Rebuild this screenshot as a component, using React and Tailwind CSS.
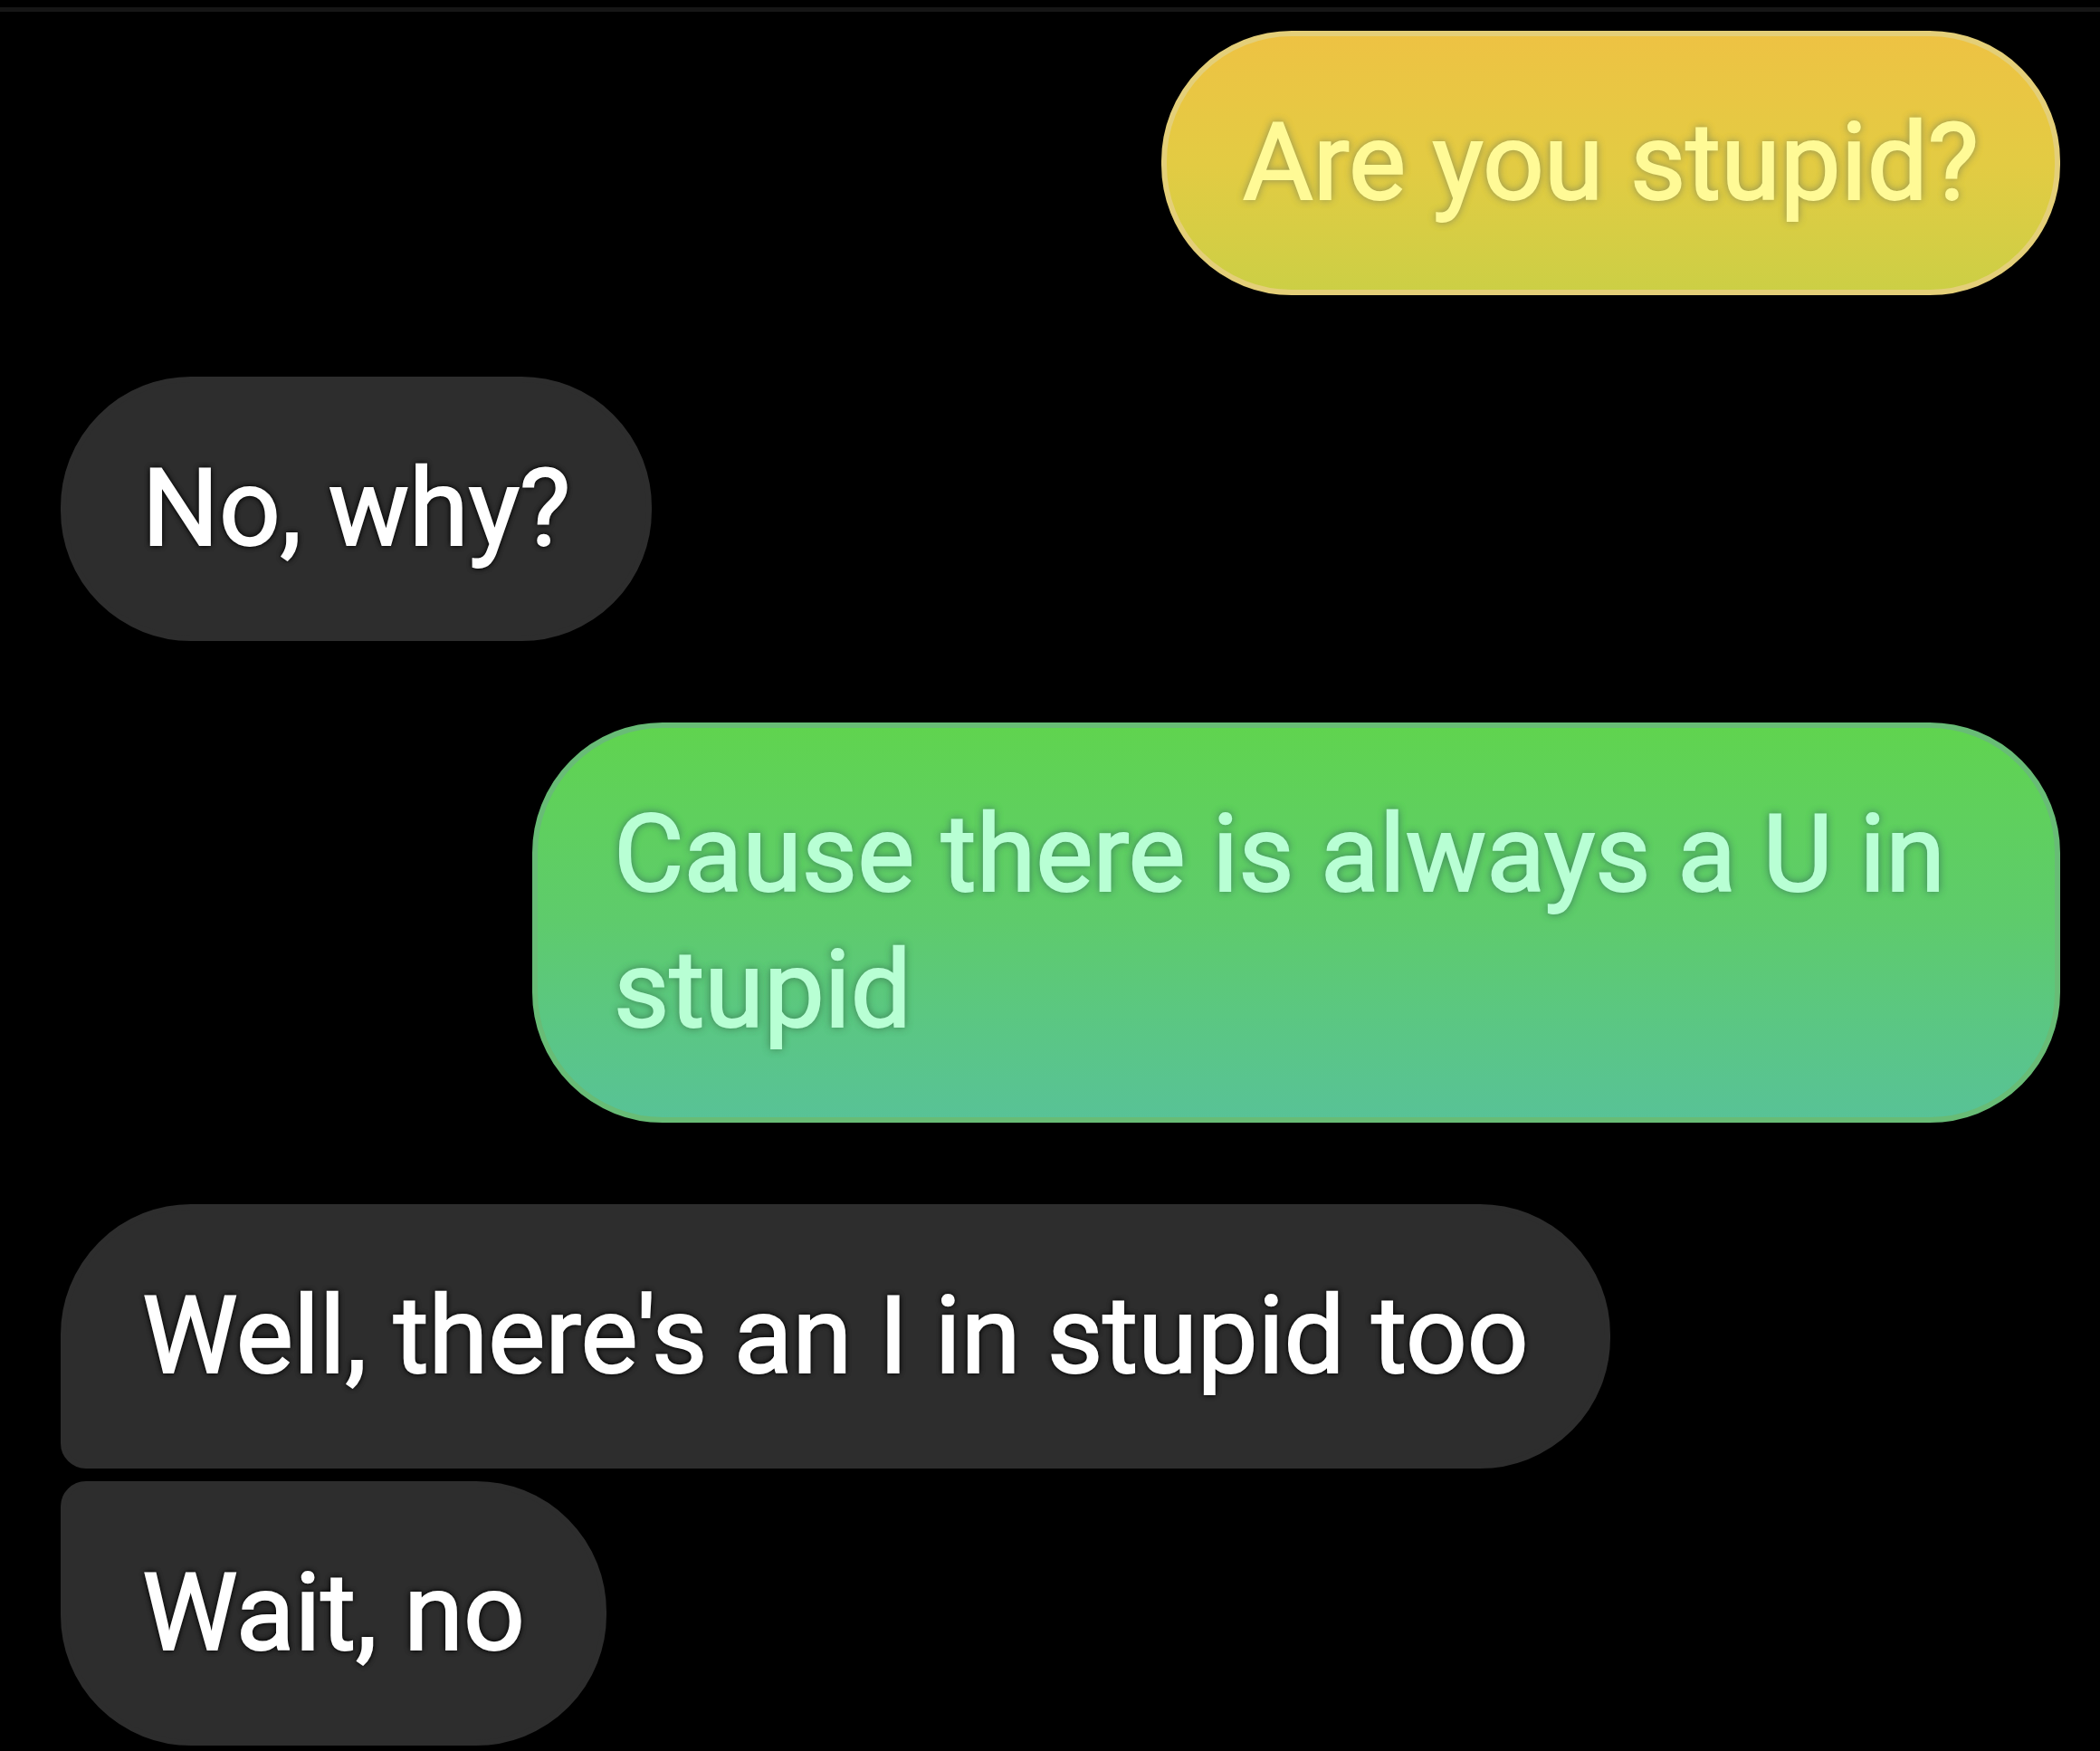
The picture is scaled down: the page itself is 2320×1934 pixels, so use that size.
import React from "react";
import clsx from "clsx";

const messages = [
  { id: 1, from: "me", text: "Are you stupid?", tone: "yellow" },
  { id: 2, from: "them", text: "No, why?" },
  { id: 3, from: "me", text: "Cause there is always a U in stupid", tone: "green" },
  { id: 4, from: "them", text: "Well, there's an I in stupid too", group: "first" },
  { id: 5, from: "them", text: "Wait, no", group: "last" },
];

const tones = {
  yellow:
    "border-[#e4cf78] bg-linear-to-b from-[#eec243] via-[#e3cb43] to-[#cbcf45] text-[#fffa96] [text-shadow:0_0_10px_#a39f50,0_0_10px_#a39f50]",
  green:
    "border-[#68bc76] bg-linear-to-b from-[#60d44e] via-[#5ecb6c] to-[#58c297] text-[#b8ffd4] [text-shadow:0_0_10px_#45935f,0_0_10px_#45935f]",
};

const Bubble = ({ message }) => {
  const { from, text, tone, group } = message;

  return (
    <li
      className={clsx(
        "rounded-[144px] border-6 bg-origin-border px-[84px] py-[65px] text-[119px] leading-[150px] [-webkit-text-stroke:2px]",
        from === "me" ? "max-w-[1688px] self-end" : "max-w-[1800px] self-start",
        tone
          ? tones[tone]
          : "border-[#2d2d2d] bg-[#2d2d2d] text-white [text-shadow:0_0_6px_#000,0_0_6px_#000]",
        // Messages sent in a row sit close and share a tight left corner
        group === "first" && "rounded-bl-[28px]",
        group === "last" && "rounded-tl-[28px]",
        group === "last" ? "mt-[14px]" : "mt-[90px] first:mt-0"
      )}
    >
      {text}
    </li>
  );
};

const App = () => {
  return (
    <main className="min-h-screen bg-black pt-2 font-['Roboto',sans-serif]">
      <hr className="border-t-[5px] border-[#161616]" />
      <ul className="flex flex-col pt-[21px] pr-11 pl-[67px]">
        {messages.map((message) => (
          <Bubble key={message.id} message={message} />
        ))}
      </ul>
    </main>
  );
};

export default App;
